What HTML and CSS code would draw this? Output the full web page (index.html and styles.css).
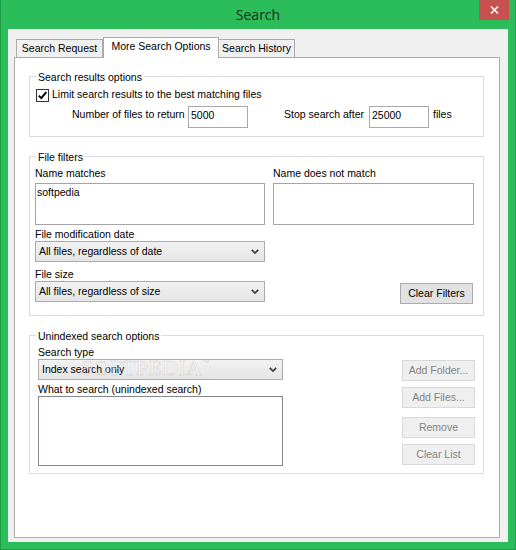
FILE: index.html
```html
<!DOCTYPE html>
<html>
<head>
<meta charset="utf-8">
<title>Search</title>
<link rel="stylesheet" href="styles.css">
</head>
<body>
<div class="window">
  <div class="titlebar">
    <span class="title">Search</span>
    <div class="close">
      <svg width="9" height="8" viewBox="0 0 9 8"><path d="M1 0.5 L8 7.5 M8 0.5 L1 7.5" stroke="#fff" stroke-width="1.6" fill="none"/></svg>
    </div>
  </div>
  <div class="client">
    <div class="tabs">
      <div class="tab tab1">Search Request</div>
      <div class="tab tab2 active">More Search Options</div>
      <div class="tab tab3">Search History</div>
    </div>
    <div class="panel">
      <fieldset class="group g1">
        <legend>Search results options</legend>
        <div class="check-row">
          <span class="checkbox"><svg width="11" height="11" viewBox="0 0 11 11"><path d="M1.8 5.6 L4.3 8.2 L9.3 2.2" stroke="#000" stroke-width="1.9" fill="none"/></svg></span>
          <span class="check-label">Limit search results to the best matching files</span>
        </div>
        <div class="limit-row">
          <span class="lbl lbl-num">Number of files to return</span>
          <div class="num-input">5000</div>
          <span class="lbl lbl-stop">Stop search after</span>
          <div class="num-input">25000</div>
          <span class="lbl lbl-files">files</span>
        </div>
      </fieldset>

      <fieldset class="group g2">
        <legend>File filters</legend>
        <div class="filters">
          <span class="lbl">Name matches</span>
          <span class="lbl">Name does not match</span>
          <div class="textbox tb-small">softpedia</div>
          <div class="textbox tb-small"></div>
          <div class="stack">
            <span class="lbl">File modification date</span>
            <div class="select"><span>All files, regardless of date</span><svg class="chev" width="8" height="5" viewBox="0 0 8 5"><path d="M0.8 0.8 L4 4 L7.2 0.8" stroke="#3c3c3c" stroke-width="1.7" fill="none"/></svg></div>
            <span class="lbl lbl-size">File size</span>
            <div class="select"><span>All files, regardless of size</span><svg class="chev" width="8" height="5" viewBox="0 0 8 5"><path d="M0.8 0.8 L4 4 L7.2 0.8" stroke="#3c3c3c" stroke-width="1.7" fill="none"/></svg></div>
          </div>
          <div class="btn btn-clear">Clear Filters</div>
        </div>
      </fieldset>

      <fieldset class="group g3">
        <legend>Unindexed search options</legend>
        <div class="unindexed">
          <div class="ucol">
            <span class="lbl">Search type</span>
            <div class="select"><span>Index search only</span><svg class="chev" width="8" height="5" viewBox="0 0 8 5"><path d="M0.8 0.8 L4 4 L7.2 0.8" stroke="#3c3c3c" stroke-width="1.7" fill="none"/></svg></div>
            <span class="lbl lbl-what">What to search (unindexed search)</span>
            <div class="textbox tb-large"></div>
          </div>
          <div class="btns">
            <div class="btn disabled">Add Folder...</div>
            <div class="btn disabled b2">Add Files...</div>
            <div class="btn disabled b3">Remove</div>
            <div class="btn disabled b4">Clear List</div>
          </div>
        </div>
      </fieldset>
    </div>
  </div>
  <div class="watermark">SOFTPEDIA<sup>™</sup></div>
</div>
</body>
</html>
```
FILE: styles.css
```css
* { box-sizing: border-box; }

body {
  margin: 0;
  font-family: "Liberation Sans", Arial, sans-serif;
  font-size: 10.5px;
  line-height: 13px;
  color: #000;
}

.window {
  position: relative;
  width: 516px;
  height: 550px;
  background: #2bbd5a;
  border: 1px solid #1f9e4a;
  border-top: 0;
}

.titlebar {
  height: 29px;
  display: grid;
  grid-template-columns: 1fr auto 1fr;
  align-items: start;
}

.title {
  grid-column: 2;
  font-family: "Open Sans", sans-serif;
  font-size: 14px;
  line-height: 30px;
  color: #1d2a21;
}

.close {
  grid-column: 3;
  justify-self: end;
  margin-right: 6px;
  width: 30px;
  height: 20px;
  background: #c75050;
  display: flex;
  align-items: center;
  justify-content: center;
}

.client {
  margin: 0 7px;
  height: 513px;
  background: #f0f0f0;
  padding: 8px 8px 0 6px;
}

.tabs {
  display: flex;
  align-items: flex-end;
  height: 20px;
  padding-left: 2px;
  position: relative;
  z-index: 1;
}

.tab {
  height: 18px;
  border: 1px solid #acacac;
  border-bottom: 0;
  background: #f0f0f0;
  text-align: center;
  line-height: 17px;
  white-space: nowrap;
}

.tab1 { width: 87px; }
.tab2 { width: 116px; }
.tab3 { width: 77px; margin-left: -1px; }

.tab.active {
  height: 21px;
  margin-bottom: -1px;
  background: #fff;
  position: relative;
  z-index: 2;
  line-height: 16px;
}

.panel {
  height: 481px;
  border: 1px solid #acacac;
  background: #fff;
  padding: 11px 15px 0 14px;
  display: flex;
  flex-direction: column;
}

.group {
  margin: 0;
  min-width: 0;
  border: 1px solid #dcdcdc;
}

.group legend {
  padding: 0 2px;
  height: 15px;
  line-height: 16px;
}

.g1 { padding: 5px 0 8px 6px; }
.g2 { margin-top: 12px; padding: 3px 0 13px 5px; }
.g2 legend { margin-left: 1px; }
.g3 { margin-top: 12px; padding: 3px 8px 7px 8px; }
.g3 legend { margin-left: -2px; }

.lbl { display: block; white-space: nowrap; }

.check-row {
  display: flex;
  height: 13px;
}

.checkbox {
  width: 13px;
  height: 13px;
  border: 1px solid #333;
  background: #fff;
  display: flex;
}

.check-label {
  margin-left: 3px;
  margin-top: -1px;
}

.limit-row {
  display: flex;
  margin-top: 4px;
  margin-left: 36px;
  height: 22px;
}

.limit-row .lbl { padding-top: 2px; }
.lbl-num { width: 116px; }
.lbl-stop { width: 121px; text-align: right; padding-right: 5px; }
.lbl-files { margin-left: 4px; }

.num-input {
  width: 60px;
  height: 22px;
  border: 1px solid #a9a9a9;
  background: #fff;
  padding: 2px 2px;
}

.filters {
  display: grid;
  grid-template-columns: 230px 201px;
  column-gap: 8px;
}

.textbox {
  border: 1px solid #a5a5a5;
  background: #fff;
  padding: 2px 1px;
}

.tb-small { height: 42px; margin-top: 3px; }

.stack {
  display: flex;
  flex-direction: column;
  margin-top: 3px;
}

.select {
  height: 21px;
  border: 1px solid #acacac;
  background: linear-gradient(#f2f2f2, #e5e5e5);
  display: flex;
  align-items: center;
  justify-content: space-between;
  padding: 0 5px 0 3px;
  white-space: nowrap;
}

.lbl-size { margin-top: 6px; }

.btn {
  width: 73px;
  height: 21px;
  border: 1px solid #adadad;
  background: #e1e1e1;
  display: flex;
  align-items: center;
  justify-content: center;
  white-space: nowrap;
}

.btn-clear {
  align-self: end;
  justify-self: end;
  margin-right: 1px;
  margin-bottom: -2px;
}

.btn.disabled {
  background: #efefef;
  border-color: #d9d9d9;
  color: #838383;
}

.unindexed {
  display: flex;
}

.ucol {
  width: 245px;
  display: flex;
  flex-direction: column;
}

.lbl-what { margin-top: 3px; }

.tb-large {
  height: 70px;
  border-color: #828790;
}

.btns {
  margin-left: auto;
  padding-top: 14px;
  display: flex;
  flex-direction: column;
}

.b2 { margin-top: 6px; }
.b3 { margin-top: 9px; }
.b4 { margin-top: 6px; }

.watermark {
  position: absolute;
  left: 80px;
  top: 351px;
  font-family: "Liberation Serif", serif;
  font-size: 22px;
  line-height: 24px;
  letter-spacing: 0.3px;
  color: rgba(255, 255, 255, 0.45);
  -webkit-text-stroke: 0.6px rgba(110, 110, 110, 0.22);
  pointer-events: none;
}

.watermark sup {
  font-family: "Liberation Sans", sans-serif;
  font-size: 7px;
  -webkit-text-stroke: 0;
  color: rgba(150, 150, 150, 0.35);
  vertical-align: 10px;
}
```
